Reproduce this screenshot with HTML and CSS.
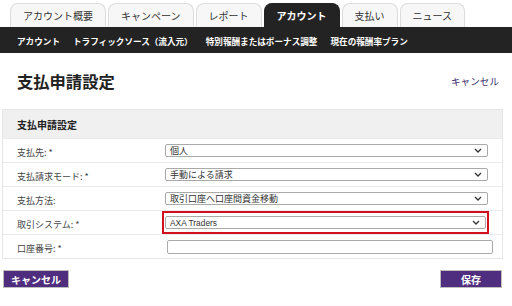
FILE: index.html
```html
<!DOCTYPE html>
<html lang="ja">

<head>
    <meta charset="UTF-8">
    <meta name="viewport" content="width=device-width, initial-scale=1.0">
    <title>支払申請設定</title>
    <link rel="stylesheet" href="styles.css">
</head>

<body>
    <nav class="tabs">
        <a class="tab" href="#">アカウント概要</a>
        <a class="tab" href="#">キャンペーン</a>
        <a class="tab" href="#">レポート</a>
        <a class="tab active" href="#">アカウント</a>
        <a class="tab" href="#">支払い</a>
        <a class="tab" href="#">ニュース</a>
    </nav>
    <div class="subnav">
        <a href="#">アカウント</a>
        <a href="#">トラフィックソース（流入元）</a>
        <a href="#">特別報酬またはボーナス調整</a>
        <a href="#">現在の報酬率プラン</a>
    </div>

    <div class="pageHead">
        <h1>支払申請設定</h1>
        <a class="cancelLink" href="#">キャンセル</a>
    </div>

    <section class="panel">
        <div class="panelHead">支払申請設定</div>

        <div class="row">
            <label>支払先: *</label>
            <div class="select"><span>個人</span>
                <svg width="8" height="5" viewBox="0 0 8 5"><path d="M1 1 L4 4 L7 1" fill="none" stroke="#333" stroke-width="1.3"/></svg>
            </div>
        </div>
        <div class="row">
            <label>支払請求モード: *</label>
            <div class="select"><span>手動による請求</span>
                <svg width="8" height="5" viewBox="0 0 8 5"><path d="M1 1 L4 4 L7 1" fill="none" stroke="#333" stroke-width="1.3"/></svg>
            </div>
        </div>
        <div class="row">
            <label>支払方法:</label>
            <div class="select"><span>取引口座へ口座間資金移動</span>
                <svg width="8" height="5" viewBox="0 0 8 5"><path d="M1 1 L4 4 L7 1" fill="none" stroke="#333" stroke-width="1.3"/></svg>
            </div>
        </div>
        <div class="row">
            <label>取引システム: *</label>
            <div class="highlight">
                <div class="select"><span class="latin">AXA Traders</span>
                    <svg width="8" height="5" viewBox="0 0 8 5"><path d="M1 1 L4 4 L7 1" fill="none" stroke="#333" stroke-width="1.3"/></svg>
                </div>
            </div>
        </div>
        <div class="row">
            <label>口座番号: *</label>
            <input class="textInput" type="text">
        </div>
    </section>

    <div class="actions">
        <button type="button">キャンセル</button>
        <button type="button" class="save">保存</button>
    </div>
</body>

</html>
```

FILE: styles.css
```css
body {
    margin: 0;
    background-color: #fff;
    font-family: "Noto Sans CJK JP", "Liberation Sans", sans-serif;
    color: #333;
}

a {
    text-decoration: none;
}

.tabs {
    display: flex;
    gap: 2px;
    padding: 3px 0 0 10px;
}

.tab {
    display: flex;
    align-items: center;
    height: 24px;
    padding: 0 12px;
    font-size: 10px;
    color: #333;
    background-color: #f7f7f7;
    border: 1px solid #dcdcdc;
    border-bottom: none;
    border-radius: 8px 8px 0 0;
    box-sizing: border-box;
}

.tab.active {
    background-color: #232323;
    border-color: #232323;
    color: #fff;
    font-weight: bold;
}

.subnav {
    display: flex;
    align-items: center;
    gap: 13px;
    height: 26px;
    padding: 2px 0 0 17px;
    box-sizing: border-box;
    background-color: #232323;
}

.subnav a {
    color: #fff;
    font-size: 8.6px;
    font-weight: bold;
}

.pageHead {
    display: flex;
    align-items: center;
    justify-content: space-between;
    height: 56px;
    padding: 0 13px 0 17px;
}

h1 {
    margin: 0;
    font-size: 16.3px;
    font-weight: bold;
    color: #222;
}

.cancelLink {
    font-size: 9.6px;
    color: #3b2a6e;
}

.panel {
    margin: 0 9px 0 2px;
    border: 1px solid #e6e6e6;
}

.panelHead {
    display: flex;
    align-items: center;
    height: 28px;
    padding-left: 14px;
    background-color: #f0f0f0;
    font-size: 10px;
    font-weight: bold;
    color: #222;
}

.row {
    display: grid;
    grid-template-columns: 148px auto;
    align-items: center;
    height: 24px;
    padding-left: 14px;
    border-top: 1px solid #ebebeb;
    box-sizing: border-box;
}

.row label {
    font-size: 9px;
    color: #444;
    padding-top: 3px;
}

.select {
    display: flex;
    align-items: center;
    justify-content: space-between;
    width: 323px;
    height: 13px;
    padding: 0 5px 0 4px;
    box-sizing: border-box;
    border: 1px solid #a9a9a9;
    border-radius: 2px;
    background-color: #fff;
    font-size: 9px;
    color: #333;
}

.latin {
    font-family: "Liberation Sans", sans-serif;
    font-size: 8.4px;
}

.highlight {
    display: flex;
    align-items: center;
    width: 327px;
    height: 23px;
    margin: 0 0 0 -3px;
    padding: 0 1px;
    box-sizing: border-box;
    border: 2px solid #d0101e;
}

.highlight .select {
    width: 321px;
}

.textInput {
    width: 326px;
    height: 14px;
    margin: 0 0 0 2px;
    padding: 0;
    box-sizing: border-box;
    border: 1px solid #aaa;
    border-radius: 2px;
}

.actions {
    display: flex;
    justify-content: space-between;
    margin-top: 11px;
    padding: 0 10px 0 3px;
}

button {
    width: 66px;
    height: 18px;
    padding: 0;
    background-color: #4f2d7f;
    color: #fff;
    border: 1px solid #bdbdbd;
    font-family: "Noto Sans CJK JP", sans-serif;
    font-size: 10px;
    font-weight: bold;
    cursor: pointer;
}

button.save {
    width: 62px;
}
```
